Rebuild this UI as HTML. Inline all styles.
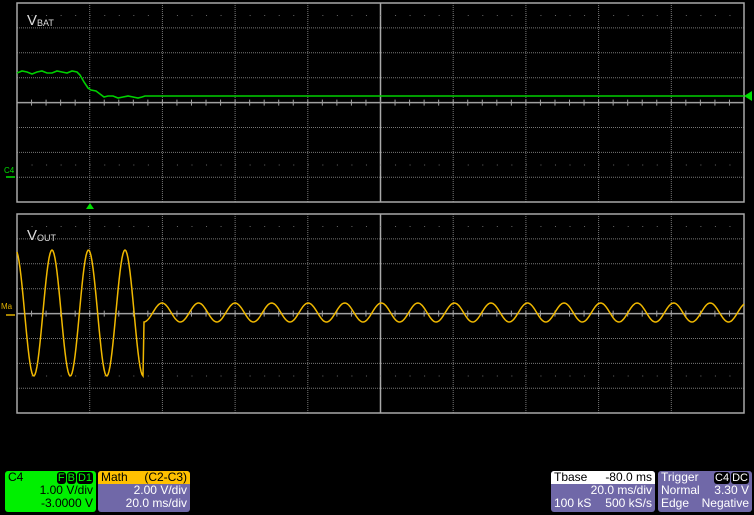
<!DOCTYPE html>
<html><head><meta charset="utf-8"><style>
body{margin:0;background:#000;width:754px;height:515px;overflow:hidden;font-family:"Liberation Sans",sans-serif}
.box{position:absolute;border-radius:3px;font-size:12px;line-height:13px;overflow:hidden}
.r{display:flex;justify-content:space-between;padding:0 3px;height:13px;white-space:nowrap}
.bd{background:#000;color:#fff;border-radius:3px;padding:0 1px;margin-left:1px;font-size:11px}
</style></head><body>
<svg id="s" width="754" height="515" style="position:absolute;left:0;top:0" xmlns="http://www.w3.org/2000/svg">
<text x="27" y="25" fill="#ddd" font-size="15" font-family="Liberation Sans">V<tspan font-size="9" dy="1">BAT</tspan></text>
<text x="27" y="240" fill="#ddd" font-size="15" font-family="Liberation Sans">V<tspan font-size="9" dy="1">OUT</tspan></text>
<text x="4" y="173" fill="#00e000" font-size="8" font-family="Liberation Sans">C4</text>
<text x="1" y="309" fill="#e0b000" font-size="8" font-family="Liberation Sans">Ma</text>
</svg>
<div class="box" style="left:5px;top:471px;width:91px;height:41px;background:#00f000;color:#000">
<div class="r"><span>C4</span><span><span class="bd" style="color:#0f0">F</span><span class="bd" style="color:#0f0">B</span><span class="bd" style="color:#0f0">D1</span></span></div>
<div class="r" style="justify-content:flex-end">1.00 V/div</div>
<div class="r" style="justify-content:flex-end">-3.0000 V</div></div>
<div class="box" style="left:98px;top:471px;width:92px;height:41px;background:#7068a8;color:#fff">
<div class="r" style="background:#ffc000;color:#000"><span>Math</span><span>(C2-C3)</span></div>
<div class="r" style="justify-content:flex-end">2.00 V/div</div>
<div class="r" style="justify-content:flex-end">20.0 ms/div</div></div>
<div class="box" style="left:551px;top:471px;width:104px;height:41px;background:#7068a8;color:#fff">
<div class="r" style="background:#fff;color:#000"><span>Tbase</span><span>-80.0 ms</span></div>
<div class="r" style="justify-content:flex-end">20.0 ms/div</div>
<div class="r"><span>100 kS</span><span>500 kS/s</span></div></div>
<div class="box" style="left:658px;top:471px;width:94px;height:41px;background:#7068a8;color:#fff">
<div class="r"><span>Trigger</span><span><span class="bd">C4</span><span class="bd">DC</span></span></div>
<div class="r"><span>Normal</span><span>3.30 V</span></div>
<div class="r"><span>Edge</span><span>Negative</span></div></div>
<script>
var s=document.getElementById('s'),h='';
function L(x1,y1,x2,y2,c,w,d){h+='<line x1="'+x1+'" y1="'+y1+'" x2="'+x2+'" y2="'+y2+'" stroke="'+c+'" stroke-width="'+(w||1)+'"'+(d?' stroke-dasharray="'+d+'"':'')+'/>';}
function panel(t){var b=t+199;
for(var i=1;i<10;i++){var x=17+i*72.7;if(i==5)L(x,t,x,b,'#a8a8a8',1.5);else L(x,t,x,b,'#777',1,'1,1');}
for(var j=1;j<8;j++){var y=t+j*24.9;if(j==4){L(17,y,744,y,'#a0a0a0',1.5);for(var k=1;k<50;k++){var x=17+k*14.54;L(x,y-3,x,y+3,'#a0a0a0',1);}}else L(17,y,744,y,'#777',1,'1,1');}
[t+12.5,b-37].forEach(function(y){for(var k=1;k<50;k++){var x=17+k*14.54;L(x,y,x+1,y,'#666',1);}});
h+='<rect x="17" y="'+t+'" width="727" height="'+(b-t)+'" fill="none" stroke="#a8a8a8" stroke-width="1.5"/>';}
panel(3);panel(214);
var g='M17 73 L22 71 27 72 32 74 37 72 42 71 47 73 52 73 57 71 62 72 67 73 72 71 77 72 80 75 84 82 88 88 91 90 96 91 100 94 104 97 108 96 113 96 118 98 123 97 128 96 133 97 138 98 142 97 145 96 744 96';
h+='<path d="'+g+'" fill="none" stroke="#00d000" stroke-width="1.6"/>';
h+='<polygon points="744,96 752,91 752,101" fill="#00e000"/>';
h+='<polygon points="86,209 94,209 90,203" fill="#00e000"/>';
h+='<line x1="6" y1="177" x2="15" y2="177" stroke="#00e000" stroke-width="1.5"/>';
h+='<line x1="6" y1="315" x2="15" y2="315" stroke="#e0b000" stroke-width="1.5"/>';
var p='M17 '+(313-63*Math.cos(2*Math.PI*(17-52)/36.5)).toFixed(1);
for(var x=18;x<=143;x++)p+=' L'+x+' '+(313-63*Math.cos(2*Math.PI*(x-52)/36.5)).toFixed(1);
p+=' L144 322';
for(var x=145;x<=744;x++)p+=' L'+x+' '+(312.5-9.5*Math.cos(2*Math.PI*(x-162)/36.55)).toFixed(1);
h+='<path d="'+p+'" fill="none" stroke="#f0b800" stroke-width="1.5"/>';
s.insertAdjacentHTML('afterbegin',h);
</script>
</body></html>
